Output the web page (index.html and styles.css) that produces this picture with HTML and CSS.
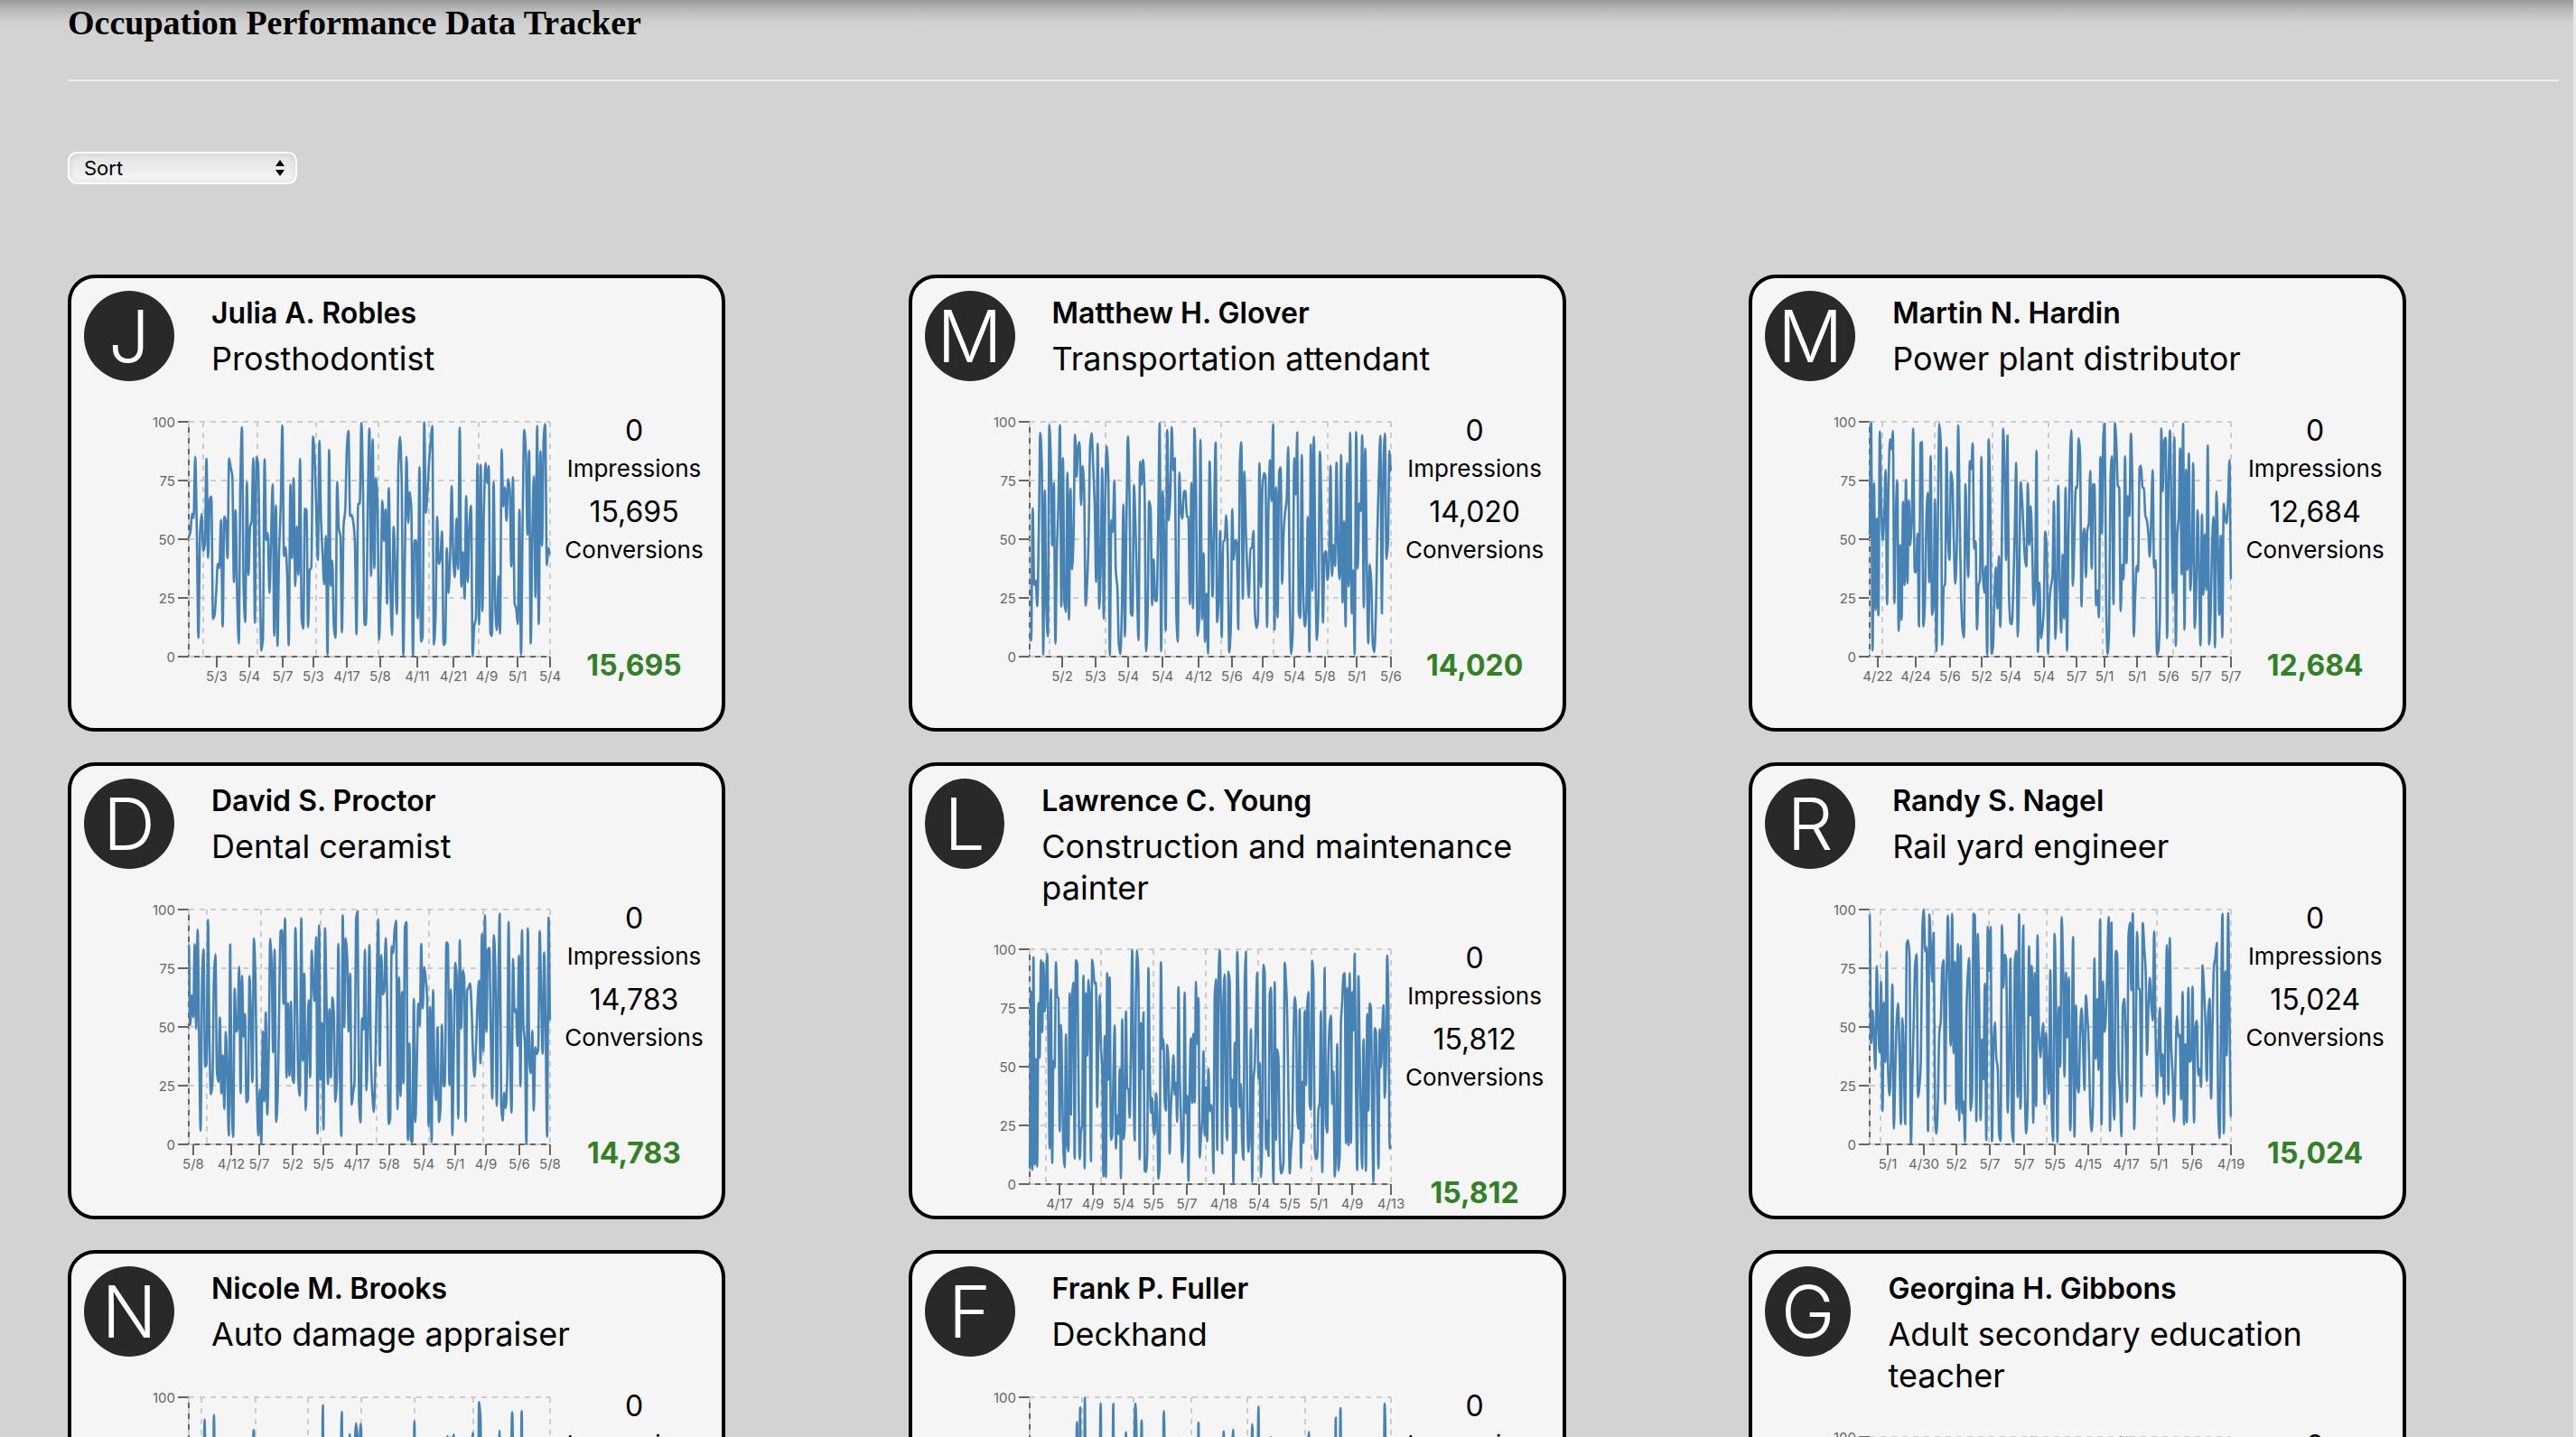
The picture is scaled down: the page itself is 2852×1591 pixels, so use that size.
FILE: index.html
```html
<!DOCTYPE html>
<html>
<head>
    <title>Occupation Performance Data Tracker</title>
    <link rel="stylesheet" href="styles.css">
</head>
<body>

    <header class="page-header">
        <h1>Occupation Performance Data Tracker</h1>
        <hr>
    </header>

    <div class="sort-box">
        <select>
            <option>Sort</option>
            <option>Impressions</option>
            <option>Conversions</option>
        </select>
        <svg class="sort-arrows" width="10" height="18" viewBox="0 0 10 18"><path d="M5 0l5 7H0zM0 11h10l-5 7z"/></svg>
    </div>

    <main class="card-grid">

        <div class="card">
            <div class="card-top">
                <div class="avatar">J</div>
                <div class="who">
                    <div class="name">Julia A. Robles</div>
                    <div class="role">Prosthodontist</div>
                </div>
            </div>
            <div class="card-body">
                <svg class="chart" width="470" height="300" viewBox="0 0 470 300" data-seed="11" data-points="225" data-grid="16,76,141,210,266,321" data-ticks="31:5/3,67:5/4,104:5/7,138:5/3,175:4/17,212:5/8,253:4/11,293:4/21,330:4/9,364:5/1,400:5/4"></svg>
                <div class="stats">
                    <div class="stat-num">0</div>
                    <div class="stat-label">Impressions</div>
                    <div class="stat-num">15,695</div>
                    <div class="stat-label">Conversions</div>
                    <div class="stat-total">15,695</div>
                </div>
            </div>
        </div>

        <div class="card">
            <div class="card-top">
                <div class="avatar">M</div>
                <div class="who">
                    <div class="name">Matthew H. Glover</div>
                    <div class="role">Transportation attendant</div>
                </div>
            </div>
            <div class="card-body">
                <svg class="chart" width="470" height="300" viewBox="0 0 470 300" data-seed="23" data-points="240" data-grid="22,84,150,212,270,330" data-ticks="36:5/2,73:5/3,109:5/4,147:5/4,187:4/12,224:5/6,258:4/9,293:5/4,327:5/8,362:5/1,400:5/6"></svg>
                <div class="stats">
                    <div class="stat-num">0</div>
                    <div class="stat-label">Impressions</div>
                    <div class="stat-num">14,020</div>
                    <div class="stat-label">Conversions</div>
                    <div class="stat-total">14,020</div>
                </div>
            </div>
        </div>

        <div class="card">
            <div class="card-top">
                <div class="avatar">M</div>
                <div class="who">
                    <div class="name">Martin N. Hardin</div>
                    <div class="role">Power plant distributor</div>
                </div>
            </div>
            <div class="card-body">
                <svg class="chart" width="470" height="300" viewBox="0 0 470 300" data-seed="37" data-points="250" data-grid="14,72,136,198,258,336" data-ticks="9:4/22,51:4/24,89:5/6,124:5/2,156:5/4,193:5/4,229:5/7,260:5/1,296:5/1,331:5/6,367:5/7,400:5/7"></svg>
                <div class="stats">
                    <div class="stat-num">0</div>
                    <div class="stat-label">Impressions</div>
                    <div class="stat-num">12,684</div>
                    <div class="stat-label">Conversions</div>
                    <div class="stat-total">12,684</div>
                </div>
            </div>
        </div>

        <div class="card">
            <div class="card-top">
                <div class="avatar">D</div>
                <div class="who">
                    <div class="name">David S. Proctor</div>
                    <div class="role">Dental ceramist</div>
                </div>
            </div>
            <div class="card-body">
                <svg class="chart" width="470" height="300" viewBox="0 0 470 300" data-seed="41" data-points="245" data-grid="20,80,146,208,266,326" data-ticks="5:5/8,47:4/12,78:5/7,115:5/2,149:5/5,186:4/17,222:5/8,260:5/4,295:5/1,329:4/9,366:5/6,400:5/8"></svg>
                <div class="stats">
                    <div class="stat-num">0</div>
                    <div class="stat-label">Impressions</div>
                    <div class="stat-num">14,783</div>
                    <div class="stat-label">Conversions</div>
                    <div class="stat-total">14,783</div>
                </div>
            </div>
        </div>

        <div class="card">
            <div class="card-top">
                <div class="avatar">L</div>
                <div class="who">
                    <div class="name">Lawrence C. Young</div>
                    <div class="role">Construction and maintenance painter</div>
                </div>
            </div>
            <div class="card-body">
                <svg class="chart" width="470" height="300" viewBox="0 0 470 300" data-seed="53" data-points="290" data-grid="18,79,137,195,253,312" data-ticks="33:4/17,70:4/9,104:5/4,137:5/5,174:5/7,215:4/18,254:5/4,288:5/5,320:5/1,357:4/9,400:4/13"></svg>
                <div class="stats">
                    <div class="stat-num">0</div>
                    <div class="stat-label">Impressions</div>
                    <div class="stat-num">15,812</div>
                    <div class="stat-label">Conversions</div>
                    <div class="stat-total">15,812</div>
                </div>
            </div>
        </div>

        <div class="card">
            <div class="card-top">
                <div class="avatar">R</div>
                <div class="who">
                    <div class="name">Randy S. Nagel</div>
                    <div class="role">Rail yard engineer</div>
                </div>
            </div>
            <div class="card-body">
                <svg class="chart" width="470" height="300" viewBox="0 0 470 300" data-seed="67" data-points="255" data-grid="12,70,132,196,256,318" data-ticks="20:5/1,60:4/30,96:5/2,133:5/7,171:5/7,205:5/5,242:4/15,284:4/17,320:5/1,357:5/6,400:4/19"></svg>
                <div class="stats">
                    <div class="stat-num">0</div>
                    <div class="stat-label">Impressions</div>
                    <div class="stat-num">15,024</div>
                    <div class="stat-label">Conversions</div>
                    <div class="stat-total">15,024</div>
                </div>
            </div>
        </div>

        <div class="card">
            <div class="card-top">
                <div class="avatar">N</div>
                <div class="who">
                    <div class="name">Nicole M. Brooks</div>
                    <div class="role">Auto damage appraiser</div>
                </div>
            </div>
            <div class="card-body">
                <svg class="chart" width="470" height="300" viewBox="0 0 470 300" data-seed="71" data-points="230" data-skew="1.7" data-grid="14,74,132,191,250,315" data-ticks="36:5/4,73:5/2,109:4/20,147:5/6,187:5/3,224:5/8,258:4/14,293:5/1,327:5/5,362:4/26,400:5/2"></svg>
                <div class="stats">
                    <div class="stat-num">0</div>
                    <div class="stat-label">Impressions</div>
                    <div class="stat-num">14,376</div>
                    <div class="stat-label">Conversions</div>
                    <div class="stat-total">14,376</div>
                </div>
            </div>
        </div>

        <div class="card">
            <div class="card-top">
                <div class="avatar">F</div>
                <div class="who">
                    <div class="name">Frank P. Fuller</div>
                    <div class="role">Deckhand</div>
                </div>
            </div>
            <div class="card-body">
                <svg class="chart" width="470" height="300" viewBox="0 0 470 300" data-seed="83" data-points="230" data-skew="2.2" data-grid="58,115,179,241,305" data-ticks="36:5/7,73:4/11,109:5/3,147:5/1,187:4/22,224:5/6,258:5/4,293:4/16,327:5/2,362:5/8,400:5/3"></svg>
                <div class="stats">
                    <div class="stat-num">0</div>
                    <div class="stat-label">Impressions</div>
                    <div class="stat-num">13,958</div>
                    <div class="stat-label">Conversions</div>
                    <div class="stat-total">13,958</div>
                </div>
            </div>
        </div>

        <div class="card">
            <div class="card-top">
                <div class="avatar">G</div>
                <div class="who">
                    <div class="name">Georgina H. Gibbons</div>
                    <div class="role">Adult secondary education teacher</div>
                </div>
            </div>
            <div class="card-body">
                <svg class="chart" width="470" height="300" viewBox="0 0 470 300" data-seed="97" data-points="240" data-grid="20,80,146,208,266,326" data-ticks="36:5/1,73:5/6,109:4/28,147:5/2,187:5/7,224:4/19,258:5/3,293:5/5,327:4/10,362:5/8,400:5/4"></svg>
                <div class="stats">
                    <div class="stat-num">0</div>
                    <div class="stat-label">Impressions</div>
                    <div class="stat-num">15,241</div>
                    <div class="stat-label">Conversions</div>
                    <div class="stat-total">15,241</div>
                </div>
            </div>
        </div>

    </main>

    <script src="chart.js"></script>
</body>
</html>
```

FILE: styles.css
```css
html, body {
    height: 100%;
    margin: 0;
    overflow: hidden;
}

body {
    box-sizing: border-box;
    padding-left: 75px;
    border-right: 3px solid #e8e8e8;
    font-family: Inter, "Liberation Sans", sans-serif;
    color: black;
    background: linear-gradient(#999999 0, #b6b6b6 10px, #cdcdcd 22px, lightgray 30px) no-repeat, lightgray;
}

.page-header {
    width: 2758px;
}

h1 {
    margin: 0;
    padding-top: 3px;
    font-family: "Liberation Serif", serif;
    font-size: 38px;
    line-height: 44px;
    font-weight: bold;
}

hr {
    height: 2px;
    margin: 41px 0 0 0;
    border: none;
    background-color: #eeeeee;
}

.sort-box {
    position: relative;
    width: 254px;
    height: 36px;
    margin-top: 78px;
}

select {
    appearance: none;
    box-sizing: border-box;
    width: 100%;
    height: 100%;
    padding: 0 0 0 16px;
    border: 2px solid white;
    border-radius: 10px;
    font-family: Inter, "Liberation Sans", sans-serif;
    font-size: 22px;
    color: black;
    background: linear-gradient(#e4e4e4, #ebebeb 50%, #f8f8f8);
    box-shadow: inset 0 0 7px rgba(0, 0, 0, 0.12);
}

.sort-arrows {
    position: absolute;
    top: 9px;
    right: 14px;
    pointer-events: none;
}

.card-grid {
    display: grid;
    grid-template-columns: repeat(3, 728px);
    column-gap: 202.6px;
    row-gap: 34px;
    margin-top: 100px;
}

.card {
    box-sizing: border-box;
    display: flex;
    flex-direction: column;
    height: 506px;
    padding: 14px 0 0 14px;
    border: 4px solid black;
    border-radius: 30px;
    background-color: whitesmoke;
}

.card-top {
    display: flex;
    gap: 41px;
}

.avatar {
    width: 100px;
    height: 100px;
    border-radius: 50%;
    font-size: 80px;
    font-weight: 300;
    line-height: 100px;
    text-align: center;
    color: white;
    background-color: #292929;
}

.who {
    padding-top: 5px;
}

.name {
    font-size: 32px;
    font-weight: 600;
    line-height: 40px;
}

.role {
    margin-top: 7px;
    font-size: 36px;
    line-height: 46px;
}

.card-body {
    display: flex;
    margin-top: 35px;
    padding-left: 56px;
}

.chart {
    flex: none;
    overflow: visible;
}

.chart text {
    font-size: 15px;
    fill: #666666;
}

.stats {
    display: flex;
    flex-direction: column;
    align-items: center;
    width: 166px;
    padding-top: 1px;
}

.stat-num {
    font-size: 32px;
    line-height: 38px;
}

.stat-label {
    margin-top: 7px;
    font-size: 26px;
    line-height: 32px;
}

.stat-label + .stat-num {
    margin-top: 13px;
}

.stat-total {
    margin-top: auto;
    font-size: 32px;
    font-weight: 700;
    line-height: 40px;
    color: #338126;
}
```

FILE: chart.js
```js
const NS = "http://www.w3.org/2000/svg";
const LEFT = 60, RIGHT = 460, TOP = 10, BOTTOM = 270;

function make(svg, tag, attrs, text) {
    let el = document.createElementNS(NS, tag);
    for (let key in attrs) el.setAttribute(key, attrs[key]);
    if (text) el.textContent = text;
    svg.appendChild(el);
    return el;
}

function random(seed) {
    return function () {
        seed = (seed + 0x6D2B79F5) | 0;
        let t = Math.imul(seed ^ (seed >>> 15), 1 | seed);
        t = (t + Math.imul(t ^ (t >>> 7), 61 | t)) ^ t;
        return ((t ^ (t >>> 14)) >>> 0) / 4294967296;
    };
}

// same curve as a monotone line: slopes are flattened at peaks and valleys
function monotonePath(pts) {
    let slopes = [];
    for (let i = 0; i < pts.length; i++) {
        let a = pts[Math.max(i - 1, 0)], b = pts[i], c = pts[Math.min(i + 1, pts.length - 1)];
        let s0 = (b[1] - a[1]) / (b[0] - a[0] || 1), s1 = (c[1] - b[1]) / (c[0] - b[0] || 1);
        slopes.push(s0 * s1 <= 0 ? 0 : 2 * s0 * s1 / (s0 + s1));
    }
    let d = "M" + pts[0][0].toFixed(1) + " " + pts[0][1].toFixed(1);
    for (let i = 1; i < pts.length; i++) {
        let dx = (pts[i][0] - pts[i - 1][0]) / 3;
        d += "C" + (pts[i - 1][0] + dx).toFixed(1) + " " + (pts[i - 1][1] + slopes[i - 1] * dx).toFixed(1)
            + " " + (pts[i][0] - dx).toFixed(1) + " " + (pts[i][1] - slopes[i] * dx).toFixed(1)
            + " " + pts[i][0].toFixed(1) + " " + pts[i][1].toFixed(1);
    }
    return d;
}

document.querySelectorAll(".chart").forEach(function (svg) {
    let rand = random(Number(svg.dataset.seed));
    let count = Number(svg.dataset.points);
    let skew = Number(svg.dataset.skew || 1);

    // axes first, the dashed grid goes over them
    make(svg, "path", { d: "M" + LEFT + " " + TOP + "V" + BOTTOM + "H" + RIGHT, fill: "none", stroke: "#666", "stroke-width": 2 });

    [0, 25, 50, 75, 100].forEach(function (v) {
        let y = BOTTOM - v * (BOTTOM - TOP) / 100;
        make(svg, "line", { x1: LEFT - 12, x2: LEFT, y1: y, y2: y, stroke: "#666", "stroke-width": 2 });
        make(svg, "text", { x: LEFT - 15, y: y + 6, "text-anchor": "end" }, String(v));
        make(svg, "line", { x1: LEFT, x2: RIGHT, y1: y, y2: y, stroke: "#ccc", "stroke-width": 2, "stroke-dasharray": "6 6" });
    });

    let grid = svg.dataset.grid.split(",").map(Number).concat([0, 400]);
    grid.forEach(function (x) {
        make(svg, "line", { x1: LEFT + x, x2: LEFT + x, y1: TOP, y2: BOTTOM, stroke: "#ccc", "stroke-width": 2, "stroke-dasharray": "6 6" });
    });

    svg.dataset.ticks.split(",").forEach(function (tick) {
        let parts = tick.split(":"), x = LEFT + Number(parts[0]);
        make(svg, "line", { x1: x, x2: x, y1: BOTTOM, y2: BOTTOM + 12, stroke: "#666", "stroke-width": 2 });
        make(svg, "text", { x: x, y: BOTTOM + 27, "text-anchor": "middle" }, parts[1]);
    });

    let pts = [];
    for (let i = 0; i < count; i++) {
        let v = Math.pow(rand(), skew) * 100;
        pts.push([LEFT + i * 400 / (count - 1), BOTTOM - v * (BOTTOM - TOP) / 100]);
    }
    make(svg, "path", { d: monotonePath(pts), fill: "none", stroke: "steelblue", "stroke-width": 2.6 });
});
```
